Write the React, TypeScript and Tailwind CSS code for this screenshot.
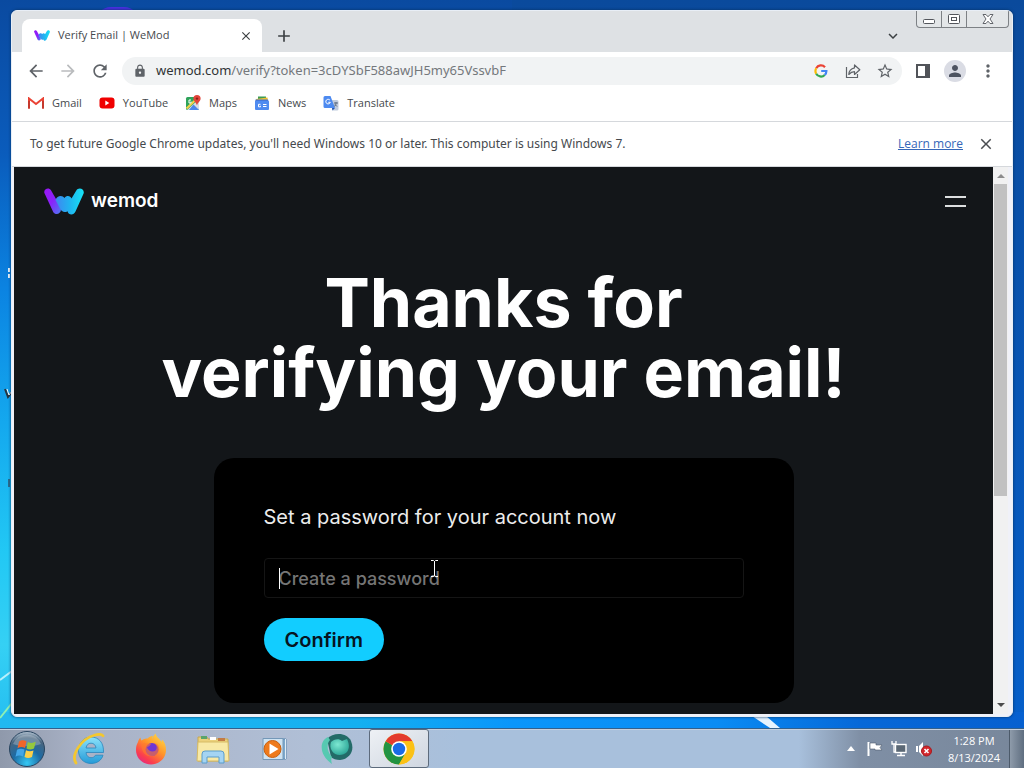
import type { ReactNode } from "react";
import {
  MdArrowBack,
  MdArrowForward,
  MdRefresh,
  MdLock,
  MdStarBorder,
  MdPerson,
  MdMoreVert,
  MdClose,
  MdAdd,
  MdKeyboardArrowDown,
} from "react-icons/md";

type Bookmark = { label: string; icon: ReactNode };

const WeModMark = ({ className, id }: { className: string; id: string }) => (
  <svg viewBox="0 0 40 27" className={className} aria-hidden="true">
    <defs>
      <linearGradient id={`${id}-l`} x1="0" y1="0" x2="1" y2="1">
        <stop offset="0" stopColor="#9a16f5" />
        <stop offset="0.5" stopColor="#8a22fa" />
        <stop offset="1" stopColor="#4c7cf2" />
      </linearGradient>
      <linearGradient id={`${id}-r`} x1="0" y1="0" x2="1" y2="0">
        <stop offset="0" stopColor="#3f86f0" />
        <stop offset="0.5" stopColor="#20b4f0" />
        <stop offset="1" stopColor="#16e4f6" />
      </linearGradient>
    </defs>
    <path d="M0.4 5 C-0.8 1.4 4.6-1.4 7 2.2 L12 11 L16.8 20.5 C18 25.6 11.6 28 9.2 24 Z" fill={`url(#${id}-l)`} />
    <path
      d="M11.5 12 C13 7.2 18.5 6.8 20.5 10 C22.5 7 26.5 7.6 27.5 10.5 L32 3 C34.5-1.6 41 1 39.6 5.6 L31.5 23.6 C29.5 27.8 24.5 27.2 23.5 23.2 C20.5 25 17.5 23.8 16 20.5 Z"
      fill={`url(#${id}-r)`}
    />
  </svg>
);

const GmailIcon = () => (
  <svg viewBox="0 0 16 12" className="h-3 w-4">
    <path d="M1 11.5V1.5L8 7l7-5.5v10" fill="none" stroke="#ea4335" strokeWidth="2" />
    <path d="M1 4v7.5M15 4v7.5" stroke="#c5392d" strokeWidth="2" />
  </svg>
);

const YouTubeIcon = () => (
  <svg viewBox="0 0 16 12" className="h-3 w-4">
    <rect x="0.5" y="0.5" width="15" height="11" rx="3" fill="#f00000" />
    <path d="M6.3 3.6v4.8l4-2.4z" fill="#fff" />
  </svg>
);

const MapsIcon = () => (
  <svg viewBox="0 0 16 16" className="h-4 w-4">
    <rect x="1" y="2" width="13" height="13" rx="1.5" fill="#2fa35a" />
    <path d="M2 15 14 4v9.500a1.500 1.500 0 0 1-1.500 1.500z" fill="#d8dde2" />
    <path d="M8.500 9.500 14 15H4z" fill="#4a86ea" />
    <path d="M1.500 13.500 11 4.500" stroke="#f7d24a" strokeWidth="2" />
    <path d="M12 0a3.600 3.600 0 0 1 3.600 3.700C15.600 6 13 7 12 10.500 11 7 8.400 6 8.400 3.700A3.600 3.600 0 0 1 12 0z" fill="#e2443a" />
    <circle cx="12" cy="3.600" r="1.200" fill="#8e1f16" />
    <path d="M6 5H4v3h2V6.500" fill="none" stroke="#fff" />
  </svg>
);

const NewsIcon = () => (
  <svg viewBox="0 0 16 16" className="h-4 w-4">
    <path d="M4 1.500h8V6H4z" fill="#3c9b55" />
    <path d="M2 4 13.500 2.500 14 7H2z" fill="#f2c02f" />
    <path d="M1.500 4.500h12.500l1 3h-14z" fill="#4477d8" />
    <rect x="1" y="6" width="14" height="9" rx="1" fill="#4f8bf0" />
    <path d="M6.500 9.300H4.500v2.500h2v-1M9 9.500h3.500M9 11.500h3.500" fill="none" stroke="#fff" />
  </svg>
);

const TranslateIcon = () => (
  <svg viewBox="0 0 16 16" className="h-4 w-4">
    <path d="M7 5h7a1.500 1.500 0 0 1 1.500 1.500V14a1.500 1.500 0 0 1-1.500 1.500H9.500z" fill="#c0cbdc" />
    <path d="M2 1h5.500L12 13H2A1.500 1.500 0 0 1 .5 11.500v-9A1.500 1.500 0 0 1 2 1z" fill="#4d8af0" />
    <path d="M9 13h3l-2.500 2.500z" fill="#2556b0" />
    <path d="M7 5.300a2.300 2.300 0 1 0 .3 2H5.300" fill="none" stroke="#fff" />
    <path d="M11 8h4M13 7v1c0 2-1 3-2 3.500M12 9.500l2 2" fill="none" stroke="#5d6b80" />
  </svg>
);

const GoogleG = () => (
  <svg viewBox="0 0 14 14" className="h-3.5 w-3.5" fill="none" strokeWidth="2.2">
    <path d="M2.200 4.300A5.400 5.400 0 0 1 11 3.200" stroke="#ea4335" />
    <path d="M2.200 9.700A5.400 5.400 0 0 1 2.200 4.300" stroke="#fbbc05" />
    <path d="M10.700 11A5.400 5.400 0 0 1 2.200 9.700" stroke="#34a853" />
    <path d="M7.200 7h5.200A5.400 5.400 0 0 1 10.700 11" stroke="#4285f4" />
  </svg>
);

const bookmarks: Bookmark[] = [
  { label: "Gmail", icon: <GmailIcon /> },
  { label: "YouTube", icon: <YouTubeIcon /> },
  { label: "Maps", icon: <MapsIcon /> },
  { label: "News", icon: <NewsIcon /> },
  { label: "Translate", icon: <TranslateIcon /> },
];

const WindowControls = () => (
  <div className="mr-[3px] flex h-[17px] self-start rounded-b-[4px] border border-t-0 border-[#7d8185] bg-[#e3e6e8]">
    <button aria-label="Minimize" className="flex w-[25px] items-center justify-center border-r border-[#7d8185]">
      <svg viewBox="0 0 14 12" className="h-3 w-3.5">
        <rect x="1.5" y="6.5" width="11" height="4" rx="1" fill="#fff" stroke="#53565c" />
      </svg>
    </button>
    <button aria-label="Maximize" className="flex w-[25px] items-center justify-center border-r border-[#7d8185]">
      <svg viewBox="0 0 14 12" className="h-3 w-3.5">
        <rect x="1.5" y="1.5" width="11" height="9" rx="1" fill="#fff" stroke="#53565c" />
        <rect x="4.5" y="4.5" width="5" height="3" fill="#fff" stroke="#53565c" />
      </svg>
    </button>
    <button aria-label="Close window" className="flex w-[41px] items-center justify-center">
      <svg viewBox="0 0 14 12" className="h-3 w-3.5">
        <path
          d="M2 1.5h3l2 2.300 2-2.300h3L9 6l3 4.500H9L7 8.200 5 10.500H2L5 6z"
          fill="#fff"
          stroke="#62656b"
        />
      </svg>
    </button>
  </div>
);

const TabStrip = () => (
  <div className="flex h-[41px] items-end bg-[#dee1e4] pl-[10px]">
    <div className="flex h-[33px] w-60 items-center rounded-t-lg bg-white pr-[9px] pl-3">
      <WeModMark id="fav" className="h-[11px] w-4" />
      <span className="ml-2 flex-1 text-[11px] text-[#45494d]">Verify Email | WeMod</span>
      <button aria-label="Close tab">
        <MdClose className="h-3.5 w-3.5 text-[#3c4043]" />
      </button>
    </div>
    <button aria-label="New tab" className="ml-3 flex h-[33px] items-center">
      <MdAdd className="h-5 w-5 text-[#3c4043]" />
    </button>
    <div className="flex-1" />
    <button aria-label="Search tabs" className="mr-3.5 flex h-[33px] items-center">
      <MdKeyboardArrowDown className="h-[18px] w-[18px] text-[#3c4043]" />
    </button>
    <WindowControls />
  </div>
);

const Toolbar = () => (
  <div className="flex h-[38px] items-center bg-white pr-3.5 pl-3.5">
    <button aria-label="Back">
      <MdArrowBack className="h-5 w-5 text-[#5f6368]" />
    </button>
    <button aria-label="Forward" className="ml-3">
      <MdArrowForward className="h-5 w-5 text-[#babcbe]" />
    </button>
    <button aria-label="Reload" className="ml-3">
      <MdRefresh className="h-5 w-5 text-[#5f6368]" />
    </button>
    <div className="ml-3 flex h-7 flex-1 items-center rounded-full bg-[#f1f3f4] pr-2 pl-[11px]">
      <MdLock className="h-3.5 w-3.5 shrink-0 text-[#5f6368]" />
      <p className="ml-[9px] flex-1 font-['Noto_Sans',sans-serif] text-[13px] text-[#74787c]">
        <span className="text-[#303336]">wemod.com</span>/verify?token=3cDYSbF588awJH5my65VssvbF
      </p>
      <button aria-label="Search with Google">
        <GoogleG />
      </button>
      <button aria-label="Share" className="ml-4">
        <svg viewBox="0 0 18 18" className="h-[18px] w-[18px]" fill="none" stroke="#5f6368" strokeWidth="1.2">
          <path d="M2.500 5v10.500h11V12" />
          <path d="M10.500 3v2.800C7 6.500 5 9 4.800 12.500 6.500 10.500 8 9.700 10.500 9.700v2.800L15.800 7.700z" strokeLinejoin="round" />
        </svg>
      </button>
      <button aria-label="Bookmark this page" className="ml-3.5">
        <MdStarBorder className="h-[18px] w-[18px] text-[#5f6368]" />
      </button>
    </div>
    <button aria-label="Side panel" className="ml-3.5">
      <svg viewBox="0 0 14 14" className="h-3.5 w-3.5">
        <path d="M0 0h14v14H0zM2 2v10h7V2z" fill="#515459" fillRule="evenodd" />
      </svg>
    </button>
    <button aria-label="Profile" className="ml-3.5 flex h-[22px] w-[22px] items-center justify-center rounded-full bg-[#dadce4]">
      <MdPerson className="h-[18px] w-[18px] text-[#4d5360]" />
    </button>
    <button aria-label="Menu" className="ml-3">
      <MdMoreVert className="h-5 w-5 text-[#5f6368]" />
    </button>
  </div>
);

const Wordmark = () => (
  <a href="#home" className="flex items-center gap-[7px] text-[19px] font-semibold">
    <WeModMark id="logo" className="h-[27px] w-10" />
    wemod
  </a>
);

const WebPage = () => (
  <div className="flex min-h-0 flex-1 bg-[#131619] font-['Inter',sans-serif] text-white">
    <main className="min-w-0 flex-1 overflow-hidden">
      <div className="flex h-[68px] items-center justify-between pr-[27px] pl-[30px]">
        <Wordmark />
        <button aria-label="Open menu" className="flex w-[21px] flex-col gap-[7px]">
          <span className="h-0.5 w-full bg-[#dcdedf]" />
          <span className="h-0.5 w-full bg-[#dcdedf]" />
        </button>
      </div>
      <h1 className="mt-8 text-center text-[68px] leading-[70px] font-bold">
        Thanks for
        <br />
        verifying your email!
      </h1>
      <form
        className="mx-auto mt-[51px] flex max-w-[580px] flex-col items-start rounded-[20px] bg-black px-[50px] pt-11 pb-[42px]"
        onSubmit={(e) => e.preventDefault()}
      >
        <label htmlFor="password" className="text-[20px] leading-[30px] text-[#ececec]">
          Set a password for your account now
        </label>
        <div className="relative mt-[26px] w-full">
          <input
            id="password"
            type="password"
            placeholder="Create a password"
            className="block h-10 w-full rounded-[4px] border border-[#151515] bg-black px-3.5 text-[18px] font-medium outline-none placeholder:text-[#757575]"
          />
          <span className="absolute top-2.5 left-[15px] h-[21px] w-px bg-white" />
          <svg viewBox="0 0 9 17" className="absolute top-0.5 left-[166px] h-[17px] w-[9px]" fill="none" stroke="#fff">
            <path d="M1 .5h2.500l1 1 1-1H8M4.500 1v15M1 16.500h2.500l1-1 1 1H8" />
          </svg>
        </div>
        <button className="mt-5 h-[43px] rounded-full bg-[#12cdff] px-[21px] text-[20px] font-semibold text-[#06141f]">
          Confirm
        </button>
      </form>
    </main>
    <div className="flex w-[15px] flex-col items-center bg-[#f1f1f1]">
      <svg viewBox="0 0 15 17" className="h-[17px] w-[15px] shrink-0">
        <path d="M4 11h8L8 7z" fill="#8c8c8c" />
      </svg>
      <div className="h-[312px] w-[13px] bg-[#c1c1c1]" />
      <div className="flex-1" />
      <svg viewBox="0 0 15 17" className="h-[17px] w-[15px] shrink-0">
        <path d="M4 6h8l-4 4z" fill="#4c4c4c" />
      </svg>
    </div>
  </div>
);

const BrowserWindow = () => (
  <section className="flex min-h-0 flex-1 flex-col overflow-hidden rounded-md border border-[#e8eef6] bg-[#f0f1f8] shadow-[0_0_3px_#06305e]">
    <TabStrip />
    <Toolbar />
    <nav className="flex h-[31px] items-start gap-[17px] bg-white px-4 pt-[3px] text-[11px] text-[#45494d]">
      {bookmarks.map((b) => (
        <a key={b.label} href={`#${b.label}`} className="flex h-5 items-center gap-2">
          {b.icon}
          {b.label}
        </a>
      ))}
    </nav>
    <div className="flex h-[46px] items-center border-y border-[#d5d8dc] bg-white pr-[17px] pl-[18px] font-['Noto_Sans',sans-serif] text-[12px] text-[#45494d]">
      <p className="flex-1">
        To get future Google Chrome updates, you'll need Windows 10 or later. This computer is using Windows 7.
      </p>
      <a href="#learn" className="font-['Open_Sans',sans-serif] text-[#3567b8] underline">
        Learn more
      </a>
      <button aria-label="Dismiss" className="ml-3.5">
        <MdClose className="h-[18px] w-[18px] text-[#4a4d51]" />
      </button>
    </div>
    <div className="flex min-h-0 flex-1 pr-1 pb-0.5 pl-0.5">
      <WebPage />
    </div>
  </section>
);

const StartOrb = () => (
  <svg viewBox="0 0 38 38" className="h-[38px] w-[38px]">
    <defs>
      <radialGradient id="orb" cx="0.5" cy="0.9" r="0.9">
        <stop offset="0" stopColor="#35c8f4" />
        <stop offset="0.45" stopColor="#1d6ba4" />
        <stop offset="0.8" stopColor="#48657f" />
        <stop offset="1" stopColor="#b9c8d6" />
      </radialGradient>
    </defs>
    <circle cx="19" cy="19" r="17.5" fill="url(#orb)" stroke="#28445f" />
    <path d="M5 14a15 15 0 0 1 28 0c-8 3-20 3-28 0z" fill="#fff" opacity="0.25" />
    <path d="M11 11.500c3-1.800 5-1.500 7.500-.2L17 18c-2.500-1.300-5-1.300-7.500.2z" fill="#f0662a" />
    <path d="M19.800 12c2.500 1.300 5 1.300 8-.2L26 18.500c-2.700 1.300-5 1.300-7.500 0z" fill="#95c83d" />
    <path d="M9 19.800c2.500-1.500 5-1.500 7.500-.2L15 26.500c-2.500-1.300-5-1.300-7.500.2z" fill="#43a6e8" />
    <path d="M18 20.200c2.500 1.300 5 1.300 7.500.2L24 27c-2.700 1.300-5 1.300-7.500 0z" fill="#fcd04a" />
  </svg>
);

const ExplorerE = () => (
  <svg viewBox="0 0 34 32" className="h-8 w-[34px]">
    <defs>
      <linearGradient id="ie" x1="0" y1="0" x2="0" y2="1">
        <stop offset="0" stopColor="#8be2fa" />
        <stop offset="1" stopColor="#259bd8" />
      </linearGradient>
    </defs>
    <path
      d="M31.500 19.500H14c.3 3.500 2.500 5.200 5 5.200 2.200 0 3.500-.8 4.500-2.500h7.500C29.500 27.500 25 30.500 19 30.500 11.500 30.500 6.500 25 6.500 17.500S11.800 4 19 4c8 0 13 6 12.500 15.500zM14 15h10c-.3-3-2.300-4.800-5-4.800S14.500 12 14 15z"
      fill="url(#ie)"
      stroke="#2a86bd"
      strokeWidth="0.8"
    />
    <path d="M4 30C-1 23 8 6 23 2c4-1 7-.8 8 .8" fill="none" stroke="#f3c730" strokeWidth="2.8" strokeLinecap="round" />
  </svg>
);

const FirefoxIcon = () => (
  <svg viewBox="0 0 32 32" className="h-8 w-8">
    <defs>
      <linearGradient id="ff" x1="0.9" y1="0" x2="0.2" y2="1">
        <stop offset="0" stopColor="#ffe14a" />
        <stop offset="0.45" stopColor="#ff9429" />
        <stop offset="0.8" stopColor="#fb3c4f" />
        <stop offset="1" stopColor="#e0288a" />
      </linearGradient>
    </defs>
    <path
      d="M3 9c.5-2 1.500-3.500 2.500-4.500 0 1.500.5 2.500 1 3 2-1.500 4-2 6-2 2-2 4-2.500 5.500-2.500-.8.800-1 2-.8 3C18 3.500 19 2 20.500.5c1 3.500 3 4.500 5 7l1 1.500.5-2.500c3 3 4 6.500 4 10.500 0 8-6.500 14.500-15 14.500S1 25 1 17c0-3 .5-5.500 2-8z"
      fill="url(#ff)"
    />
    <circle cx="17" cy="16.500" r="6.500" fill="#7136d3" />
    <path d="M6 12c4-3 7-1 10-1-1 2-3 2.500-4 3.500 1.500 4 6 5 8.500 3 2-2 1.500-5-1-7.500 5 .5 6 7 3 10.500-4 4.500-13 3.500-15-3z" fill="#ff7a2c" opacity="0.6" />
  </svg>
);

const FolderIcon = () => (
  <svg viewBox="0 0 34 30" className="h-[30px] w-[34px]">
    <path d="M2 3h9l1 2h20v22H2z" fill="#ecd17b" stroke="#c8a951" />
    <path d="M5 2h6v3H5z" fill="#5aa469" />
    <path d="M14 3h6v3h-6z" fill="#fff" />
    <path d="M22 4h7v3h-7z" fill="#c37b45" />
    <path d="M2 8h30l1 19H1z" fill="#f8e9a6" stroke="#d6bb66" />
    <path d="M6 29v-9q0-3 3-3h16q3 0 3 3v9h-5v-6H11v6z" fill="#a4d4f3" stroke="#5b9dcb" />
  </svg>
);

const MediaPlayerIcon = () => (
  <svg viewBox="0 0 28 26" className="h-[26px] w-7">
    <path d="M7 3h18v20H7z" fill="#7ea9cd" stroke="#5a86ae" />
    <path d="M4 2.500h18v21H2v-21z" fill="#cfe3f2" stroke="#7498b8" />
    <path d="M24.500 3v20" stroke="#e1edf7" />
    <circle cx="11.500" cy="13" r="8.500" fill="#ee7a1c" stroke="#c9600f" />
    <path d="M8.500 7.500v11l9-5.500z" fill="#fff" />
  </svg>
);

const TealOrbIcon = () => (
  <svg viewBox="0 0 34 32" className="h-8 w-[34px]">
    <defs>
      <radialGradient id="teal" cx="0.4" cy="0.35" r="0.7">
        <stop offset="0" stopColor="#7de8d2" />
        <stop offset="1" stopColor="#2ba596" />
      </radialGradient>
    </defs>
    <path d="M7 6C13-1 27-1 31 8c4 9-1 18-11 19-4 0-7-1-9-3z" fill="#236b68" />
    <path d="M8 4C-1 8-1 22 12 31c-1-3-1-5 0-7C6 18 7 10 10 7z" fill="#56c9b1" />
    <path d="M11 9c3-3 8-4 11-1l5-2c2 4 3 9 0 13-4 4-12 4-15-1-2-3-2-6-1-9z" fill="url(#teal)" />
  </svg>
);

const ChromeIcon = () => (
  <svg viewBox="0 0 32 32" className="h-8 w-8">
    <circle cx="16" cy="16" r="15.500" fill="#fbc116" />
    <path d="M16 16 2.600 8.250A15.500 15.500 0 0 0 16 31.500l6.700-11.600z" fill="#229342" />
    <path d="M16 16 2.600 8.250A15.500 15.500 0 0 1 29.400 8.250H16z" fill="#e33b2e" />
    <path d="M16 8.250h13.400A15.500 15.500 0 0 1 16 31.500l6.700-11.600z" fill="#fbc116" />
    <circle cx="16" cy="16" r="7.800" fill="#fff" />
    <circle cx="16" cy="16" r="6.200" fill="#1a6be6" />
  </svg>
);

const pinned = [
  { label: "Internet Explorer", icon: <ExplorerE /> },
  { label: "Firefox", icon: <FirefoxIcon /> },
  { label: "Windows Explorer", icon: <FolderIcon /> },
  { label: "Media Player", icon: <MediaPlayerIcon /> },
  { label: "Browser", icon: <TealOrbIcon /> },
];

const Tray = () => (
  <div className="flex items-center">
    <button aria-label="Show hidden icons">
      <svg viewBox="0 0 8 5" className="h-[5px] w-2">
        <path d="M0 5h8L4 0z" fill="#fff" />
      </svg>
    </button>
    <button aria-label="Action center" className="ml-3">
      <svg viewBox="0 0 16 16" className="h-4 w-4">
        <path d="M1.500 1v14" stroke="#fff" strokeWidth="2" />
        <path d="M3 2h6v2h6l-2 2.500 2 2.500H8V8H3z" fill="#fff" stroke="#4d5b6b" strokeWidth="0.6" />
      </svg>
    </button>
    <button aria-label="Network" className="ml-2">
      <svg viewBox="0 0 16 16" className="h-4 w-4" fill="none">
        <rect x="4.500" y="3.500" width="10.500" height="8" fill="#5b6875" stroke="#fff" strokeWidth="1.4" />
        <path d="M6 14.500h8M10 12v2" stroke="#fff" strokeWidth="1.4" />
        <path d="M1 0v3h4V0M3 3v8h2" stroke="#fff" strokeWidth="1.3" />
      </svg>
    </button>
    <button aria-label="Volume" className="ml-2">
      <svg viewBox="0 0 18 16" className="h-4 w-[18px]">
        <path d="M1 5h2v6H1zM4 5l4-4v14l-4-4z" fill="#fff" />
        <circle cx="11.500" cy="10" r="5" fill="#d3262b" stroke="#a8191d" />
        <path d="m9.500 8 4 4m0-4-4 4" stroke="#fff" strokeWidth="1.6" />
      </svg>
    </button>
    <time className="ml-3.5 flex w-[54px] flex-col items-center text-[11px] leading-[17px] text-white">
      <span>1:28 PM</span>
      <span>8/13/2024</span>
    </time>
    <button
      aria-label="Show desktop"
      className="ml-2 h-[38px] w-[15px] border-l border-[#4c5a6a] bg-linear-to-r from-[#8e9baa] to-[#5f6e80]"
    />
  </div>
);

const Taskbar = () => (
  <footer className="flex h-10 shrink-0 items-center border-t border-[#33608c] bg-[linear-gradient(to_right,#8f99ab,#a9b2c6_8%,#b0bfd6_30%,#a8c0dc_45%,#a8c0dc_78%,#7f8fa5_84%,#78879b)] pl-2 shadow-[inset_0_1px_0_#c6d0de]">
    <button aria-label="Start">
      <StartOrb />
    </button>
    <div className="ml-3 flex flex-1 items-center">
      {pinned.map((p) => (
        <button key={p.label} aria-label={p.label} className="flex w-[62px] justify-center">
          {p.icon}
        </button>
      ))}
      <button
        aria-label="Google Chrome"
        className="ml-px flex h-[39px] w-[60px] items-center justify-center rounded-[3px] border border-[#5d6b7c] bg-linear-to-br from-[#eef1f5] to-[#cfd6e0]"
      >
        <ChromeIcon />
      </button>
    </div>
    <Tray />
  </footer>
);

// wallpaper, with the edges of desktop shortcuts showing around the window
const Desktop = () => (
  <div className="absolute inset-0 -z-10">
    <div className="absolute inset-0 bg-[linear-gradient(to_bottom,#0a4aa0,#0a5cbc_20%,#0b84e2_38%,#14a8ee_55%,#22c8f4_72%,#35d0f4_84%,#1cb4ee)]" />
    <div className="absolute inset-y-0 right-0 w-1/2 bg-linear-to-b from-[#0a4a9c] to-[#0560cc]" />
    <div className="absolute inset-x-0 bottom-0 h-14 bg-[linear-gradient(to_right,#22b8f0,#14b0f0_35%,#0a96fa_50%,#0a8cf4_70%,#0668d8_84%,#0660d0)]" />
    <div className="absolute top-[7px] left-[95px] h-4 w-[45px] rounded-t-full bg-[#4a2fe0]" />
    <svg viewBox="0 0 12 720" className="absolute top-0 left-0 h-[720px] w-3" fill="none">
      <path d="M9 268v4M9 274v4" stroke="#e8f2fa" strokeWidth="2" />
      <path d="M5 389l3 8 4-5" stroke="#26343e" strokeWidth="2" />
      <path d="M7 389l2 6 3-4" stroke="#fff" />
      <path d="M9 479v8" stroke="#2b6c8c" strokeWidth="2" />
      <path d="M0 680 12 671" stroke="#b8f0fc" strokeWidth="2" />
      <path d="M0 718 12 703" stroke="#8ef0b4" strokeWidth="2" />
    </svg>
    <svg viewBox="0 0 30 12" className="absolute bottom-10 left-[752px] h-3 w-[30px]">
      <path d="M0 0h14l14 12H18z" fill="#e6f3fe" />
    </svg>
  </div>
);

const App = () => (
  <div className="relative isolate flex h-screen flex-col overflow-hidden font-['Open_Sans','Noto_Sans',sans-serif]">
    <Desktop />
    <div className="flex min-h-0 flex-1 flex-col px-[11px] pt-2.5 pb-[11px]">
      <BrowserWindow />
    </div>
    <Taskbar />
  </div>
);

export default App;
